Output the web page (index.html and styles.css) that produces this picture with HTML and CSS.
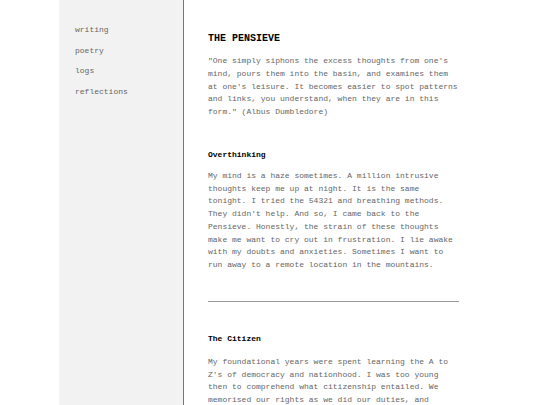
FILE: index.html
```html
<!DOCTYPE html>
<html>
<head>
<meta charset="utf-8">
<link rel="stylesheet" href="styles.css">
</head>
<body>
<div class="page">
  <nav class="sidebar">
    <ul class="nav-list">
      <li class="nav-item">writing</li>
      <li class="nav-item">poetry</li>
      <li class="nav-item">logs</li>
      <li class="nav-item">reflections</li>
    </ul>
  </nav>
  <main class="main">
    <h1 class="title">THE PENSIEVE</h1>
    <p class="text">"One simply siphons the excess thoughts from one's mind, pours them into the basin, and examines them at one's leisure. It becomes easier to spot patterns and links, you understand, when they are in this form." (Albus Dumbledore)</p>
    <h2 class="heading first">Overthinking</h2>
    <p class="text">My mind is a haze sometimes. A million intrusive thoughts keep me up at night. It is the same tonight. I tried the 54321 and breathing methods. They didn't help. And so, I came back to the Pensieve. Honestly, the strain of these thoughts make me want to cry out in frustration. I lie awake with my doubts and anxieties. Sometimes I want to run away to a remote location in the mountains.</p>
    <hr class="rule">
    <h2 class="heading">The Citizen</h2>
    <p class="text">My foundational years were spent learning the A to Z's of democracy and nationhood. I was too young then to comprehend what citizenship entailed. We memorised our rights as we did our duties, and learned them by heart for every examination.</p>
  </main>
</div>
</body>
</html>
```
FILE: styles.css
```css
html, body {
  margin: 0;
  padding: 0;
  background: #ffffff;
}
body {
  font-family: "Liberation Mono", "Courier New", monospace;
  font-size: 8px;
  color: #666666;
  height: 405px;
  overflow: hidden;
}
.page {
  display: flex;
  margin-left: 59px;
  min-height: 405px;
}
.sidebar {
  width: 124px;
  background: #f2f2f2;
  border-right: 1px solid #777777;
  flex-shrink: 0;
}
.nav-list {
  list-style: none;
  margin: 0;
  padding: 24px 0 0 16px;
}
.nav-item {
  height: 20.5px;
  line-height: 11px;
}
.main {
  padding: 32px 0 0 24px;
  width: 251px;
}
.title {
  margin: 0 0 9px 0;
  font-size: 10px;
  line-height: 14px;
  font-weight: bold;
  color: #000000;
}
.text {
  margin: 0;
  line-height: 12.75px;
}
.heading {
  margin: 0 0 11px 0;
  font-size: 8px;
  line-height: 12px;
  font-weight: bold;
  color: #000000;
}
.heading.first {
  margin-top: 30px;
  margin-bottom: 9px;
}
.rule {
  margin: 29px 0 30px 0;
  border: none;
  border-top: 1px solid #999999;
}
.rule + .heading {
  margin-top: 31px;
}
```
